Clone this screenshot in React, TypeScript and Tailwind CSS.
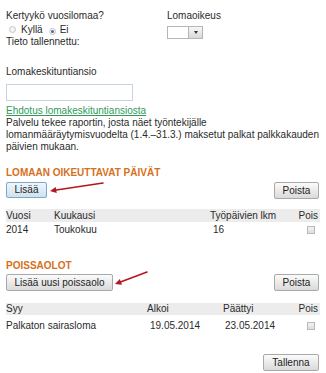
import React from 'react'

const btn =
  'h-[17px] px-[7px] rounded-[2px] border border-[#a9a9a9] bg-gradient-to-b from-[#fbfbfb] to-[#dadada] text-[10px] leading-[15px] text-[#222]'

const Radio = ({ checked }: { checked?: boolean }) => (
  <span className="inline-flex items-center justify-center w-[7px] h-[7px] rounded-full border border-[#c4c4c4] bg-[#f4f4f4]">
    {checked && <span className="w-[3px] h-[3px] rounded-full bg-[#3d6ea8]" />}
  </span>
)

const Check = () => (
  <span className="inline-block w-[8px] h-[8px] border border-[#b9b9b9] bg-gradient-to-b from-[#f2f2f2] to-[#dedede]" />
)

const Arrow = ({ x1, y1, x2, y2 }: { x1: number; y1: number; x2: number; y2: number }) => {
  const a = Math.atan2(y2 - y1, x2 - x1)
  const l = 7
  const p1 = [x2 - l * Math.cos(a - 0.45), y2 - l * Math.sin(a - 0.45)]
  const p2 = [x2 - l * Math.cos(a + 0.45), y2 - l * Math.sin(a + 0.45)]
  return (
    <>
      <line x1={x1} y1={y1} x2={x2 - 3 * Math.cos(a)} y2={y2 - 3 * Math.sin(a)} stroke="#b5161c" strokeWidth="1.6" strokeLinecap="round" />
      <polygon points={`${x2},${y2} ${p1[0]},${p1[1]} ${p2[0]},${p2[1]}`} fill="#b5161c" />
    </>
  )
}

export default function App() {
  return (
    <div className="relative w-[326px] h-[373px] bg-white overflow-hidden px-[6px] pt-[10px] text-[10px] leading-[12px] text-[#2a2a2a] [font-family:'Liberation_Sans',Arial,sans-serif]">
      {/* Top */}
      <div className="flex">
        <div className="w-[161px]">
          <div className="h-[12px]">Kertyykö vuosilomaa?</div>
          <div className="h-[13px] mt-[1px] flex items-center pl-[3px]">
            <Radio />
            <span className="ml-[5px]">Kyllä</span>
            <span className="ml-[6px]"><Radio checked /></span>
            <span className="ml-[4px]">Ei</span>
          </div>
          <div className="h-[12px]">Tieto tallennettu:</div>
        </div>
        <div>
          <div className="h-[12px]">Lomaoikeus</div>
          <div className="mt-[4px] w-[36px] h-[13px] border border-[#b5b5b5] flex justify-end">
            <div className="w-[14px] h-full border-l border-[#b5b5b5] bg-gradient-to-b from-[#f7f7f7] to-[#d8d8d8] flex items-center justify-center">
              <span className="w-0 h-0 border-l-[2px] border-r-[2px] border-t-[3px] border-l-transparent border-r-transparent border-t-[#333]" />
            </div>
          </div>
        </div>
      </div>

      <div className="mt-[18px] h-[12px]">Lomakeskituntiansio</div>
      <div className="mt-[6px] w-[127px] h-[17px] border border-[#c6d4e0] bg-white" />
      <div className="mt-[4px] h-[12px]">
        <span className="text-[#2f9a5a] underline">Ehdotus lomakeskituntiansiosta</span>
      </div>
      <p className="leading-[12px]">
        Palvelu tekee raportin, josta näet työntekijälle lomanmääräytymisvuodelta (1.4.–31.3.) maksetut palkat palkkakauden päivien mukaan.
      </p>

      {/* Lomaan oikeuttavat päivät */}
      <div className="mt-[14px] h-[12px] font-bold text-[#d6701c]">LOMAAN OIKEUTTAVAT PÄIVÄT</div>
      <div className="mt-[3px] flex justify-between">
        <button className="h-[16px] w-[41px] rounded-[2px] border border-[#7fa6c4] bg-gradient-to-b from-[#eef6fc] to-[#cfe2ef] text-[10px] leading-[14px] text-[#222]">
          Lisää
        </button>
        <button className={btn + ' w-[45px] px-0 mr-[1px]'}>Poista</button>
      </div>
      <div className="mt-[10px] h-[13px] bg-[#ececec] grid grid-cols-[48px_156px_1fr_auto] items-center">
        <span>Vuosi</span>
        <span>Kuukausi</span>
        <span>Työpäivien lkm</span>
        <span className="pr-[2px]">Pois</span>
      </div>
      <div className="h-[15px] grid grid-cols-[48px_159px_1fr_auto] items-center">
        <span>2014</span>
        <span>Toukokuu</span>
        <span>16</span>
        <span className="pr-[5px] flex"><Check /></span>
      </div>

      {/* Poissaolot */}
      <div className="mt-[23px] h-[12px] font-bold text-[#d6701c]">POISSAOLOT</div>
      <div className="mt-[2px] flex justify-between">
        <button className={btn + ' w-[107px] px-0'}>Lisää uusi poissaolo</button>
        <button className={btn + ' w-[45px] px-0 mr-[1px]'}>Poista</button>
      </div>
      <div className="mt-[12px] h-[12px] bg-[#ececec] grid grid-cols-[141px_76px_1fr_auto] items-center">
        <span>Syy</span>
        <span>Alkoi</span>
        <span>Päättyi</span>
        <span className="pr-[2px]">Pois</span>
      </div>
      <div className="mt-[4px] h-[13px] grid grid-cols-[144px_75px_1fr_auto] items-center">
        <span>Palkaton sairasloma</span>
        <span>19.05.2014</span>
        <span>23.05.2014</span>
        <span className="pr-[5px] flex"><Check /></span>
      </div>

      <div className="mt-[22px] flex justify-end">
        <button className={btn + ' w-[56px] px-0 mr-[1px]'}>Tallenna</button>
      </div>

      <svg className="absolute left-0 top-0 pointer-events-none" width="326" height="373">
        <Arrow x1={103} y1={183} x2={50} y2={191} />
        <Arrow x1={147} y1={272} x2={115} y2={284} />
      </svg>
    </div>
  )
}
